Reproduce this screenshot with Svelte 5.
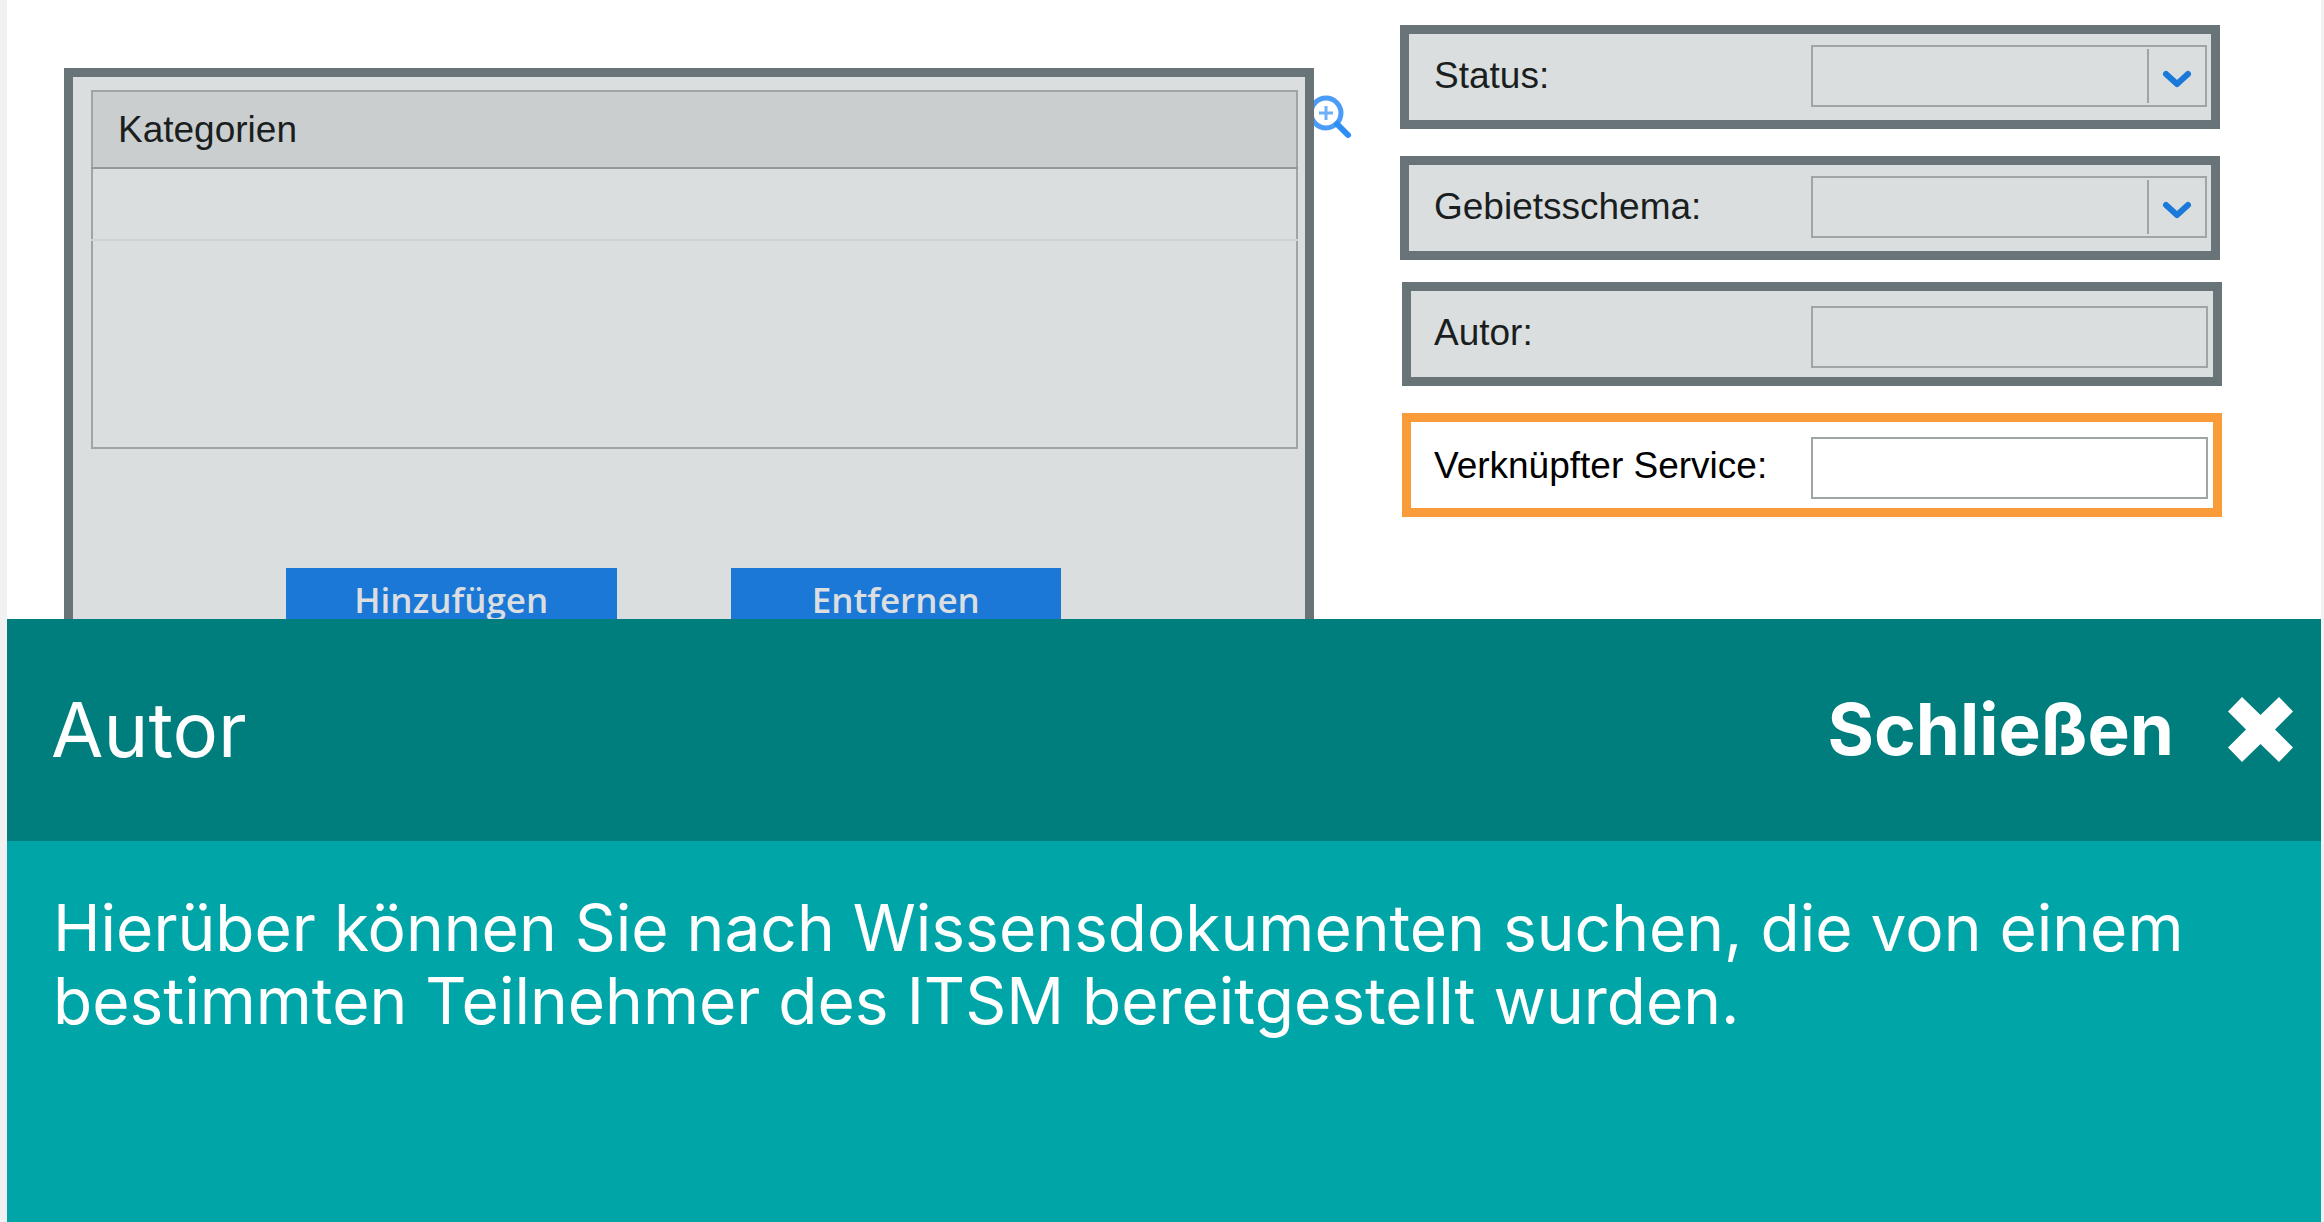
<script>
  let selects = [
    { id: 'status', label: 'Status:' },
    { id: 'locale', label: 'Gebietsschema:' }
  ];
</script>

<div class="page">
  <form class="search" onsubmit={(e) => e.preventDefault()}>
    <section class="panel">
      <table>
        <thead><tr><th scope="col">Kategorien</th></tr></thead>
        <tbody>
          <tr class="row"><td></td></tr>
          <tr class="rest"><td></td></tr>
        </tbody>
      </table>
      <div class="actions">
        <button type="button">Hinzufügen</button>
        <button type="button">Entfernen</button>
      </div>
    </section>

    <button type="button" class="lookup" aria-label="Kategorien suchen">
      <svg width="42" height="50" viewBox="0 0 42 50" fill="none" stroke="#4a9cf6">
        <circle cx="12" cy="23" r="15" stroke-width="5" />
        <path d="M5 23H19M12 16V30" stroke="#6eb0f8" stroke-width="3" />
        <path d="M23 34L34 45" stroke="#2f8ef3" stroke-width="6" stroke-linecap="round" />
      </svg>
    </button>

    <div class="fields">
      <div class="group">
        {#each selects as field}
          <div class="field">
            <label for={field.id}>{field.label}</label>
            <div class="select">
              <select id={field.id}><option value=""></option></select>
              <svg width="60" height="60" viewBox="0 0 60 60" fill="none">
                <path d="M1 2V56" stroke="#9fa4a5" stroke-width="2" />
                <path d="M19 27L30 37L41 27" stroke="#1b7ad9" stroke-width="6" stroke-linecap="round" stroke-linejoin="round" />
              </svg>
            </div>
          </div>
        {/each}
      </div>
      <div class="group texts">
        <div class="field">
          <label for="author">Autor:</label>
          <input id="author" type="text" />
        </div>
        <div class="field active">
          <label for="service">Verknüpfter Service:</label>
          <input id="service" type="text" />
        </div>
      </div>
    </div>
  </form>

  <section class="help" aria-labelledby="help-title">
    <header>
      <h2 id="help-title">Autor</h2>
      <button type="button" class="close">
        Schließen
        <svg width="65" height="65" viewBox="0 0 65 65" fill="#fff" aria-hidden="true">
          <path d="M14 0L32.5 18L51 0L65 14.5L47 32.5L65 50.5L51 65L32.5 47L14 65L0 50.5L18 32.5L0 14.5Z" />
        </svg>
      </button>
    </header>
    <p>Hierüber können Sie nach Wissensdokumenten suchen, die von einem bestimmten Teilnehmer des ITSM bereitgestellt wurden.</p>
  </section>
</div>

<style>
  :global(body) {
    background: #f1f1f1;
  }

  .page {
    box-sizing: border-box;
    min-height: 100vh;
    padding: 0 3px 0 7px;
    display: flex;
    flex-direction: column;
    font-family: "Liberation Sans", Arial, sans-serif;
    font-size: 37px;
    color: #1a1e1f;
  }

  .search {
    box-sizing: border-box;
    height: 619px;
    overflow: hidden;
    padding: 25px 99px 0 57px;
    display: grid;
    grid-template-columns: 1250fr 86px 822fr;
    align-items: start;
    background: #fff;
  }

  .panel {
    margin-top: 43px;
    padding: 13px 7px 40px 18px;
    border: 9px solid #697478;
    background: #dadede;
  }

  table {
    width: 100%;
    border-collapse: collapse;
    border: 2px solid #9fa4a5;
  }

  th {
    box-sizing: border-box;
    height: 77px;
    padding: 0 25px;
    border-bottom: 2px solid #939899;
    background: #cacece;
    font-weight: 400;
    text-align: left;
  }

  td {
    padding: 0;
  }

  .row td {
    height: 70px;
    border-bottom: 2px solid #cfd3d3;
  }

  .rest td {
    height: 206px;
  }

  .actions {
    margin-top: 119px;
    padding: 0 237px 0 195px;
    display: grid;
    grid-template-columns: 1fr 1fr;
    gap: 114px;
  }

  .actions button {
    height: 68px;
    padding: 0 0 4px;
    border: 0;
    background: #1b78d7;
    color: #dadee0;
    font: 600 35px/64px "Open Sans", sans-serif;
  }

  .lookup {
    margin-top: 65px;
    padding: 0;
    border: 0;
    background: none;
    line-height: 0;
    justify-self: start;
  }

  .fields {
    display: grid;
    gap: 22px;
  }

  .group {
    display: grid;
    gap: 27px;
    padding-right: 2px;
  }

  .texts {
    padding: 0 0 0 2px;
  }

  .field {
    box-sizing: border-box;
    height: 104px;
    padding: 0 4px 0 25px;
    border: 9px solid #697478;
    background: #dadede;
    display: grid;
    grid-template-columns: 377fr 397fr;
    align-items: start;
  }

  .texts .field {
    padding: 0 5px 0 23px;
  }

  .texts .active {
    border-color: #f99b39;
    background: #fff;
    color: #000;
  }

  label {
    padding-top: 20px;
    line-height: 44px;
    white-space: nowrap;
  }

  .active label {
    padding-top: 22px;
  }

  select,
  input {
    box-sizing: border-box;
    width: 100%;
    height: 62px;
    margin: 0;
    padding: 0 12px;
    border: 2px solid #9fa4a5;
    border-radius: 0;
    background: transparent;
    appearance: none;
    font: inherit;
    color: inherit;
  }

  input {
    margin-top: 15px;
  }

  .select {
    margin-top: 11px;
    display: grid;
  }

  .select > * {
    grid-area: 1 / 1;
  }

  .select svg {
    justify-self: end;
    margin-top: 2px;
    pointer-events: none;
  }

  .help {
    flex: 1;
    background: #00a6a7;
    color: #fff;
    font-family: Inter, sans-serif;
  }

  header {
    box-sizing: border-box;
    height: 222px;
    padding: 0 28px 2px 44px;
    display: flex;
    align-items: center;
    justify-content: space-between;
    background: #007d7d;
  }

  h2 {
    margin: 0;
    font-size: 76px;
    font-weight: 400;
  }

  .close {
    padding: 0;
    border: 0;
    background: none;
    color: inherit;
    font: 700 71px Inter, sans-serif;
    display: flex;
    align-items: center;
    gap: 54px;
  }

  p {
    margin: 0;
    padding: 50px 92px 50px 46px;
    font-size: 64px;
    line-height: 73px;
  }
</style>
